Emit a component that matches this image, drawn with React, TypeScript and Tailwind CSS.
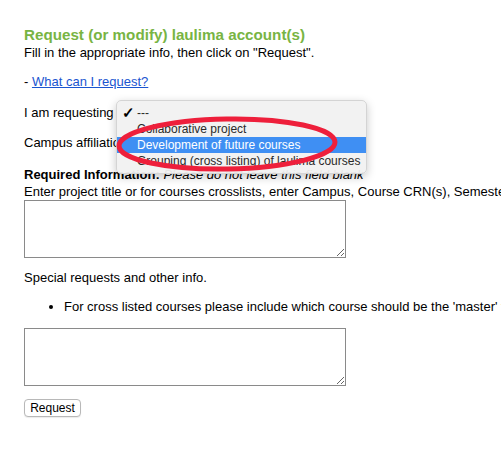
export default function App() {
  const options = [
    { label: '---', checked: true },
    { label: 'Collaborative project' },
    { label: 'Development of future courses', active: true },
    { label: 'Grouping (cross listing) of laulima courses' },
  ];

  return (
    <div className="relative min-h-[449px] w-[501px] overflow-hidden bg-white pl-6 text-[13px] text-black font-['Liberation_Sans',Arial,sans-serif]">
      <h1 className="pt-[26px] text-[15.2px] leading-[18px] font-bold text-[#78b443]">
        Request (or modify) laulima account(s)
      </h1>
      <p className="mt-px leading-4">Fill in the appropriate info, then click on "Request".</p>

      <p className="mt-[13px] leading-4">
        - <a href="#" className="text-[#1a55d0] underline">What can I request?</a>
      </p>

      <div className="mt-[13px] flex h-5 items-center">
        <span>I am requesting</span>
      </div>
      <div className="mt-[10px] flex h-5 items-center">
        <span>Campus affiliation</span>
      </div>

      <p className="mt-[14px] leading-4">
        <span className="font-bold">Required Information:</span>{' '}
        <i>Please do not leave this field blank</i>
      </p>
      <p className="mt-px whitespace-nowrap leading-4">
        Enter project title or for courses crosslists, enter Campus, Course CRN(s), Semester
      </p>
      <textarea className="block h-[58px] w-[322px] resize border border-[#8a8a8a] bg-white" />

      <p className="mt-3 leading-4">Special requests and other info.</p>
      <ul className="mt-[13px] list-disc pl-10 leading-4">
        <li className="whitespace-nowrap">
          For cross listed courses please include which course should be the 'master' to
        </li>
      </ul>
      <textarea className="mt-[13px] block h-[58px] w-[322px] resize border border-[#8a8a8a] bg-white" />

      <button className="mt-[13px] flex h-[18px] w-[57px] items-center justify-center rounded-[4px] border border-[#b8b8b8] bg-white text-[12px] text-black shadow-[0_1px_1px_rgba(0,0,0,0.08)]">
        Request
      </button>

      {/* open select menu */}
      <div className="absolute left-[116px] top-[100px] w-[251px] rounded-[5px] border border-[#d4d4d4] bg-[#f1f1f1]/95 py-[4px] text-[12px] text-[#2a2a2a] shadow-[0_3px_10px_rgba(0,0,0,0.22)]">
        {options.map((o) => (
          <div
            key={o.label}
            className={
              'relative flex h-4 items-center whitespace-nowrap pl-[20px] ' +
              (o.active ? 'bg-[#3f8ff3] text-white' : '')
            }
          >
            {o.checked && (
              <span className="absolute left-[5px] text-[15px] font-bold leading-4 text-black">✓</span>
            )}
            {o.label}
          </div>
        ))}
      </div>

      <svg className="pointer-events-none absolute left-0 top-0" width="501" height="449">
        <ellipse
          cx="227"
          cy="144"
          rx="108"
          ry="25"
          fill="none"
          stroke="#ee1f3b"
          strokeWidth="5"
          transform="rotate(-1 227 144)"
        />
      </svg>
    </div>
  );
}
